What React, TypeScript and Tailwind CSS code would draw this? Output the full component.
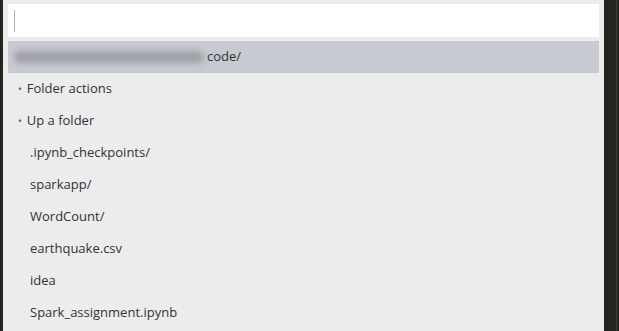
import React from 'react'

const items = [
  { label: 'Folder actions', bullet: true },
  { label: 'Up a folder', bullet: true },
  { label: '.ipynb_checkpoints/' },
  { label: 'sparkapp/' },
  { label: 'WordCount/' },
  { label: 'earthquake.csv' },
  { label: 'idea' },
  { label: 'Spark_assignment.ipynb' },
]

export default function App() {
  return (
    <div
      className="flex h-[331px] w-[619px] overflow-hidden bg-[#23241f]"
      style={{ fontFamily: '"Open Sans", "Noto Sans", sans-serif' }}
    >
      <div className="ml-[3px] flex h-full w-[601px] flex-col bg-[#ececec] px-[5px] pt-[4px]">
        {/* search input */}
        <div className="flex h-[33px] items-center bg-white pl-[6px]">
          <div className="h-[22px] w-px bg-[#b0b0b0]" />
        </div>

        {/* current path */}
        <div className="mt-[4px] flex h-[32px] items-center bg-[#c8cad1] text-[13px] text-[#333]">
          <div className="relative ml-[2px] h-[14px] w-[198px]">
            <div className="absolute inset-x-[4px] inset-y-[1px] rounded-full bg-[#9ea0a6] blur-[3px]" />
          </div>
          <span className="-ml-[1px]">code/</span>
        </div>

        {/* list */}
        <div className="flex flex-col">
          {items.map((it) => (
            <div
              key={it.label}
              className={`flex h-[32px] items-center text-[13px] text-[#333] ${it.bullet ? 'pl-[10px]' : 'pl-[22px]'}`}
            >
              {it.bullet && <span className="mr-[5px] text-[10px] text-[#555]">•</span>}
              {it.label}
            </div>
          ))}
        </div>
      </div>
      <div className="ml-[12px] h-full w-px bg-[#3a3b33]" />
    </div>
  )
}
